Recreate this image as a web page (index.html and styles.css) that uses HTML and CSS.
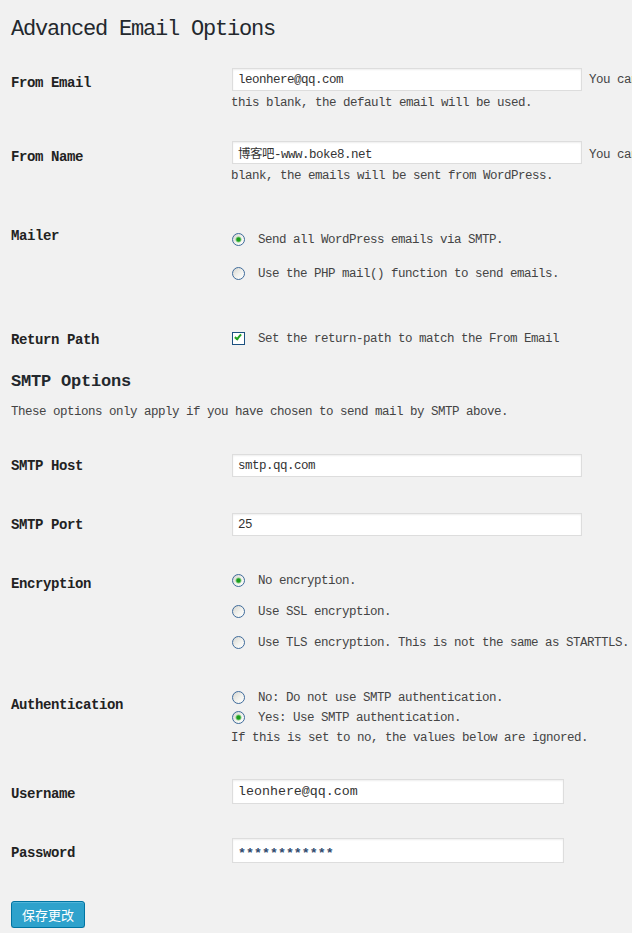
FILE: index.html
```html
<!DOCTYPE html>
<html lang="zh-CN">
<head>
  <meta charset="UTF-8" />
  <meta name="viewport" content="width=device-width, initial-scale=1.0" />
  <title>Advanced Email Options</title>
  <link rel="stylesheet" href="styles.css">
</head>
<body>
  <div class="wrap">
    <h1>Advanced Email Options</h1>

    <form>
      <!-- General options -->
      <table class="form-table">
        <tr class="row-email">
          <th>From Email</th>
          <td><input type="text" class="regular-text" value="leonhere@qq.com"> <span class="description">You can specify the email address that emails should be sent from. If you leave<br>this blank, the default email will be used.</span></td>
        </tr>
        <tr class="row-name">
          <th>From Name</th>
          <td><input type="text" class="regular-text" value="博客吧-www.boke8.net"> <span class="description">You can specify the name that emails should be sent from. If you leave this<br>blank, the emails will be sent from WordPress.</span></td>
        </tr>
        <tr class="row-mailer">
          <th>Mailer</th>
          <td>
            <p><input type="radio" name="mailer" id="mailer-smtp" checked><label for="mailer-smtp">Send all WordPress emails via SMTP.</label></p>
            <p><input type="radio" name="mailer" id="mailer-mail"><label for="mailer-mail">Use the PHP mail() function to send emails.</label></p>
          </td>
        </tr>
        <tr class="row-return">
          <th>Return Path</th>
          <td><input type="checkbox" id="return-path" checked><label for="return-path">Set the return-path to match the From Email</label></td>
        </tr>
      </table>

      <h3>SMTP Options</h3>
      <p class="intro">These options only apply if you have chosen to send mail by SMTP above.</p>

      <!-- SMTP options -->
      <table class="form-table">
        <tr class="row-field">
          <th>SMTP Host</th>
          <td><input type="text" class="regular-text" value="smtp.qq.com"></td>
        </tr>
        <tr class="row-field">
          <th>SMTP Port</th>
          <td><input type="text" class="regular-text" value="25"></td>
        </tr>
        <tr class="row-encryption">
          <th>Encryption</th>
          <td>
            <p><input type="radio" name="ssl" id="ssl-none" checked><label for="ssl-none">No encryption.</label></p>
            <p><input type="radio" name="ssl" id="ssl-ssl"><label for="ssl-ssl">Use SSL encryption.</label></p>
            <p><input type="radio" name="ssl" id="ssl-tls"><label for="ssl-tls">Use TLS encryption. This is not the same as STARTTLS.</label></p>
          </td>
        </tr>
        <tr class="row-auth">
          <th>Authentication</th>
          <td>
            <input type="radio" name="auth" id="auth-no"><label for="auth-no">No: Do not use SMTP authentication.</label><br>
            <input type="radio" name="auth" id="auth-yes" checked><label for="auth-yes">Yes: Use SMTP authentication.</label><br>
            <span class="description">If this is set to no, the values below are ignored.</span>
          </td>
        </tr>
        <tr class="row-login">
          <th>Username</th>
          <td><input type="text" class="login-text" value="leonhere@qq.com"></td>
        </tr>
        <tr class="row-login">
          <th>Password</th>
          <td><input type="text" class="login-text password" value="************"></td>
        </tr>
      </table>

      <p class="submit"><button type="submit" class="button-primary">保存更改</button></p>
    </form>
  </div>
</body>
</html>
```

FILE: styles.css
```css
/* Base */
*, *::before, *::after { box-sizing: border-box; }
html, body { margin: 0; padding: 0; background: #f1f1f1; overflow: hidden; }
body { font-family: 'Liberation Mono', 'Noto Sans CJK SC', monospace; font-size: 12.5px; letter-spacing: -0.5px; line-height: 18px; color: #444; }
.wrap { padding-left: 11px; }

h1 { margin: 17px 0 10px; font-size: 22px; font-weight: normal; letter-spacing: -1.2px; line-height: 26px; color: #23282d; }
h3 { margin: 9px 0 0; font-size: 17px; font-weight: bold; letter-spacing: -0.2px; line-height: 22px; color: #23282d; }
p { margin: 0; }
p.intro { margin: 10px 0 15px; }

/* Form table */
.form-table { border-collapse: collapse; border-spacing: 0; }
.form-table th { width: 220px; min-width: 220px; padding: 21px 0 0; vertical-align: top; text-align: left; white-space: nowrap; font-size: 14px; font-weight: bold; letter-spacing: -0.4px; line-height: 18px; color: #222; }
.form-table td { padding: 0; vertical-align: top; white-space: nowrap; }

.row-email td { padding: 15px 0 15px; }
.row-name td { padding: 14px 0 21px; }
.row-email .regular-text, .row-name .regular-text { margin-bottom: 3px; }
.row-mailer td { padding: 25px 0 27px; }
.row-mailer p { margin-bottom: 16px; }
.row-mailer p:last-child { margin-bottom: 0; }
.row-return td { padding: 20px 0 14px; }
.row-field td { padding: 18px 0; }
.row-encryption td { padding: 18px 0 23px; }
.row-encryption p { margin-bottom: 13px; }
.row-encryption p:last-child { margin-bottom: 0; }
.row-auth td { padding: 13px 0 16px; line-height: 20px; }
.row-login td { padding: 15px 0 19px; }

/* Inputs */
input[type=text] { margin: 0 0 0 1px; padding: 0 5px; border: 1px solid #ddd; background: #fff; box-shadow: inset 0 1px 2px rgba(0,0,0,0.07); color: #333; font: inherit; letter-spacing: inherit; outline: none; }
.regular-text { width: 350px; height: 23px; }
.row-field .regular-text { display: block; }
.login-text { display: block; width: 332px; height: 25px; font-size: 13.3px !important; letter-spacing: 0 !important; }
.login-text.password { color: #2f4a6e; font-weight: bold; padding-top: 6px; }

input[type=radio], input[type=checkbox] { -webkit-appearance: none; appearance: none; position: relative; width: 13px; height: 13px; margin: 0 13px 0 1px; vertical-align: middle; }
input[type=radio] { border: 1px solid #3f6b9b; border-radius: 50%; background: linear-gradient(135deg, #d6d6d0 0%, #f2f2ee 55%, #fff 100%); }
input[type=radio]:checked { background: radial-gradient(circle, #1c9d1c 0, #1c9d1c 1.6px, #8ad08a 2.6px, rgba(255,255,255,0) 3.4px), linear-gradient(135deg, #d6d6d0 0%, #f2f2ee 55%, #fff 100%); }
input[type=checkbox] { border: 1px solid #1c5180; background: #fff; }
input[type=checkbox]:checked::before { content: ""; position: absolute; left: 3px; top: 0; width: 4px; height: 7px; border: solid #21a121; border-width: 0 2px 2px 0; transform: rotate(40deg); }

/* Submit */
p.submit { margin-top: 19px; }
.button-primary { height: 27px; padding: 0 10px; border: 1px solid #0074a2; border-radius: 3px; background: #2ea2cc; box-shadow: inset 0 1px 0 rgba(120,200,230,0.5), 0 1px 0 rgba(0,0,0,0.15); color: #fff; font-family: 'Noto Sans CJK SC', sans-serif; font-size: 13px; letter-spacing: 0; line-height: 25px; cursor: pointer; }
```
